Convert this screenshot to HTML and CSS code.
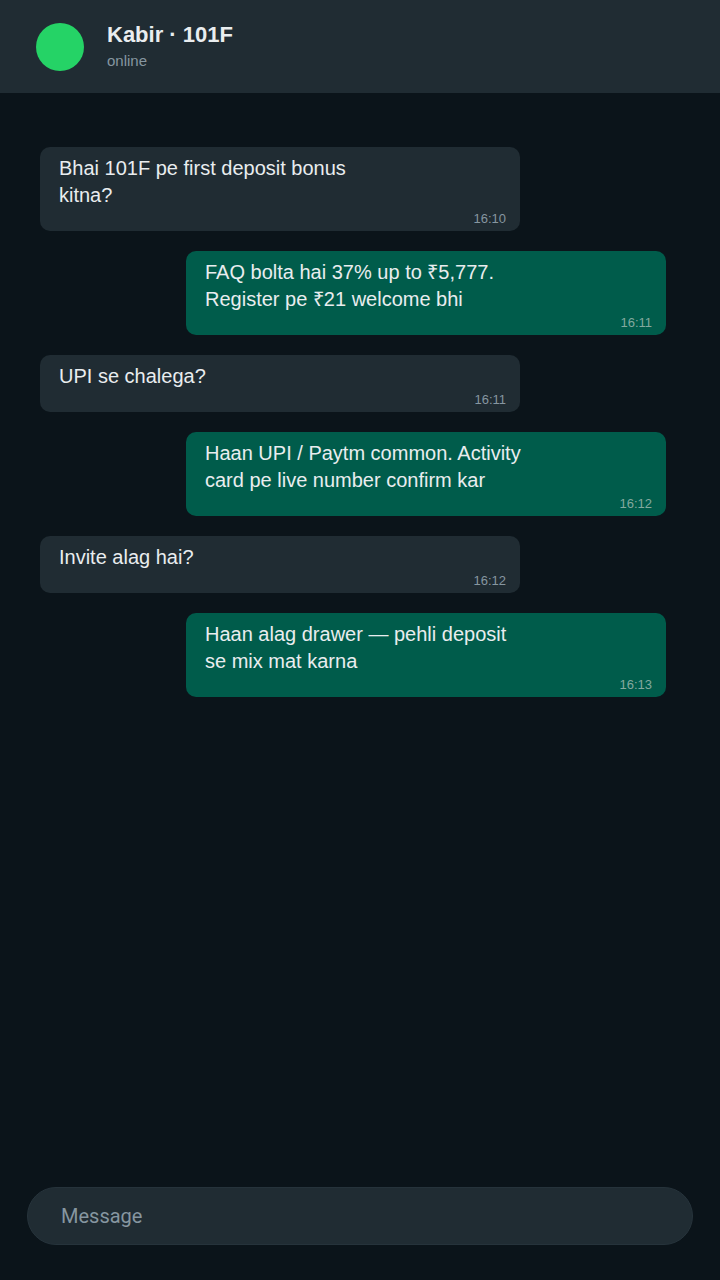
FILE: index.html
```html
<!DOCTYPE html>
<html lang="en">
<head>
    <meta charset="UTF-8">
    <meta name="viewport" content="width=device-width, initial-scale=1.0">
    <title>Kabir · 101F</title>
    <link rel="stylesheet" href="styles.css">
</head>
<body>
    <div class="app">
        <header class="chat-header">
            <div class="avatar"></div>
            <div class="contact">
                <div class="contact-name">Kabir · 101F</div>
                <div class="contact-status">online</div>
            </div>
        </header>

        <main class="messages">
            <div class="bubble in">
                <div class="text">Bhai 101F pe first deposit bonus kitna?</div>
                <div class="time">16:10</div>
            </div>
            <div class="bubble out">
                <div class="text">FAQ bolta hai 37% up to ₹5,777. Register pe ₹21 welcome bhi</div>
                <div class="time">16:11</div>
            </div>
            <div class="bubble in">
                <div class="text">UPI se chalega?</div>
                <div class="time">16:11</div>
            </div>
            <div class="bubble out">
                <div class="text">Haan UPI / Paytm common. Activity card pe live number confirm kar</div>
                <div class="time">16:12</div>
            </div>
            <div class="bubble in">
                <div class="text">Invite alag hai?</div>
                <div class="time">16:12</div>
            </div>
            <div class="bubble out">
                <div class="text">Haan alag drawer — pehli deposit se mix mat karna</div>
                <div class="time">16:13</div>
            </div>
        </main>

        <footer class="composer">
            <input type="text" class="message-input" placeholder="Message">
        </footer>
    </div>
</body>
</html>
```

FILE: styles.css
```css
* {
    box-sizing: border-box;
}
body {
    margin: 0;
    font-family: "Liberation Sans", Arial, sans-serif;
    background-color: #0b141a;
    color: #e9edef;
}
.app {
    display: flex;
    flex-direction: column;
    height: 100vh;
}
.chat-header {
    display: flex;
    align-items: center;
    gap: 23px;
    height: 93px;
    padding: 0 36px;
    background-color: #202c33;
}
.avatar {
    width: 48px;
    height: 48px;
    border-radius: 50%;
    background-color: #25d366;
}
.contact-name {
    font-size: 22px;
    font-weight: bold;
    line-height: 26px;
    margin-bottom: 3px;
}
.contact-status {
    font-size: 15px;
    color: #8696a0;
    line-height: 20px;
}
.messages {
    flex: 1;
    display: flex;
    flex-direction: column;
    gap: 20px;
    padding: 54px 54px 0 40px;
}
.bubble {
    width: 480px;
    padding: 8px 14px 4px 19px;
    border-radius: 10px;
}
.bubble.in {
    align-self: flex-start;
    background-color: #202c33;
}
.bubble.out {
    align-self: flex-end;
    background-color: #005c4b;
}
.text {
    max-width: 322px;
    font-size: 20px;
    line-height: 27px;
}
.time {
    margin-top: 2px;
    text-align: right;
    font-size: 13px;
    line-height: 16px;
    color: #8696a0;
}
.bubble.out .time {
    color: #83a99e;
}
.composer {
    padding: 0 27px 35px;
}
.message-input {
    width: 100%;
    height: 58px;
    padding: 0 33px;
    border: 1px solid #26333b;
    border-radius: 29px;
    background-color: #202c33;
    color: #e9edef;
    font-family: Roboto, "Liberation Sans", Arial, sans-serif;
    font-size: 20px;
    outline: none;
}
.message-input::placeholder {
    color: #8696a0;
}
```
